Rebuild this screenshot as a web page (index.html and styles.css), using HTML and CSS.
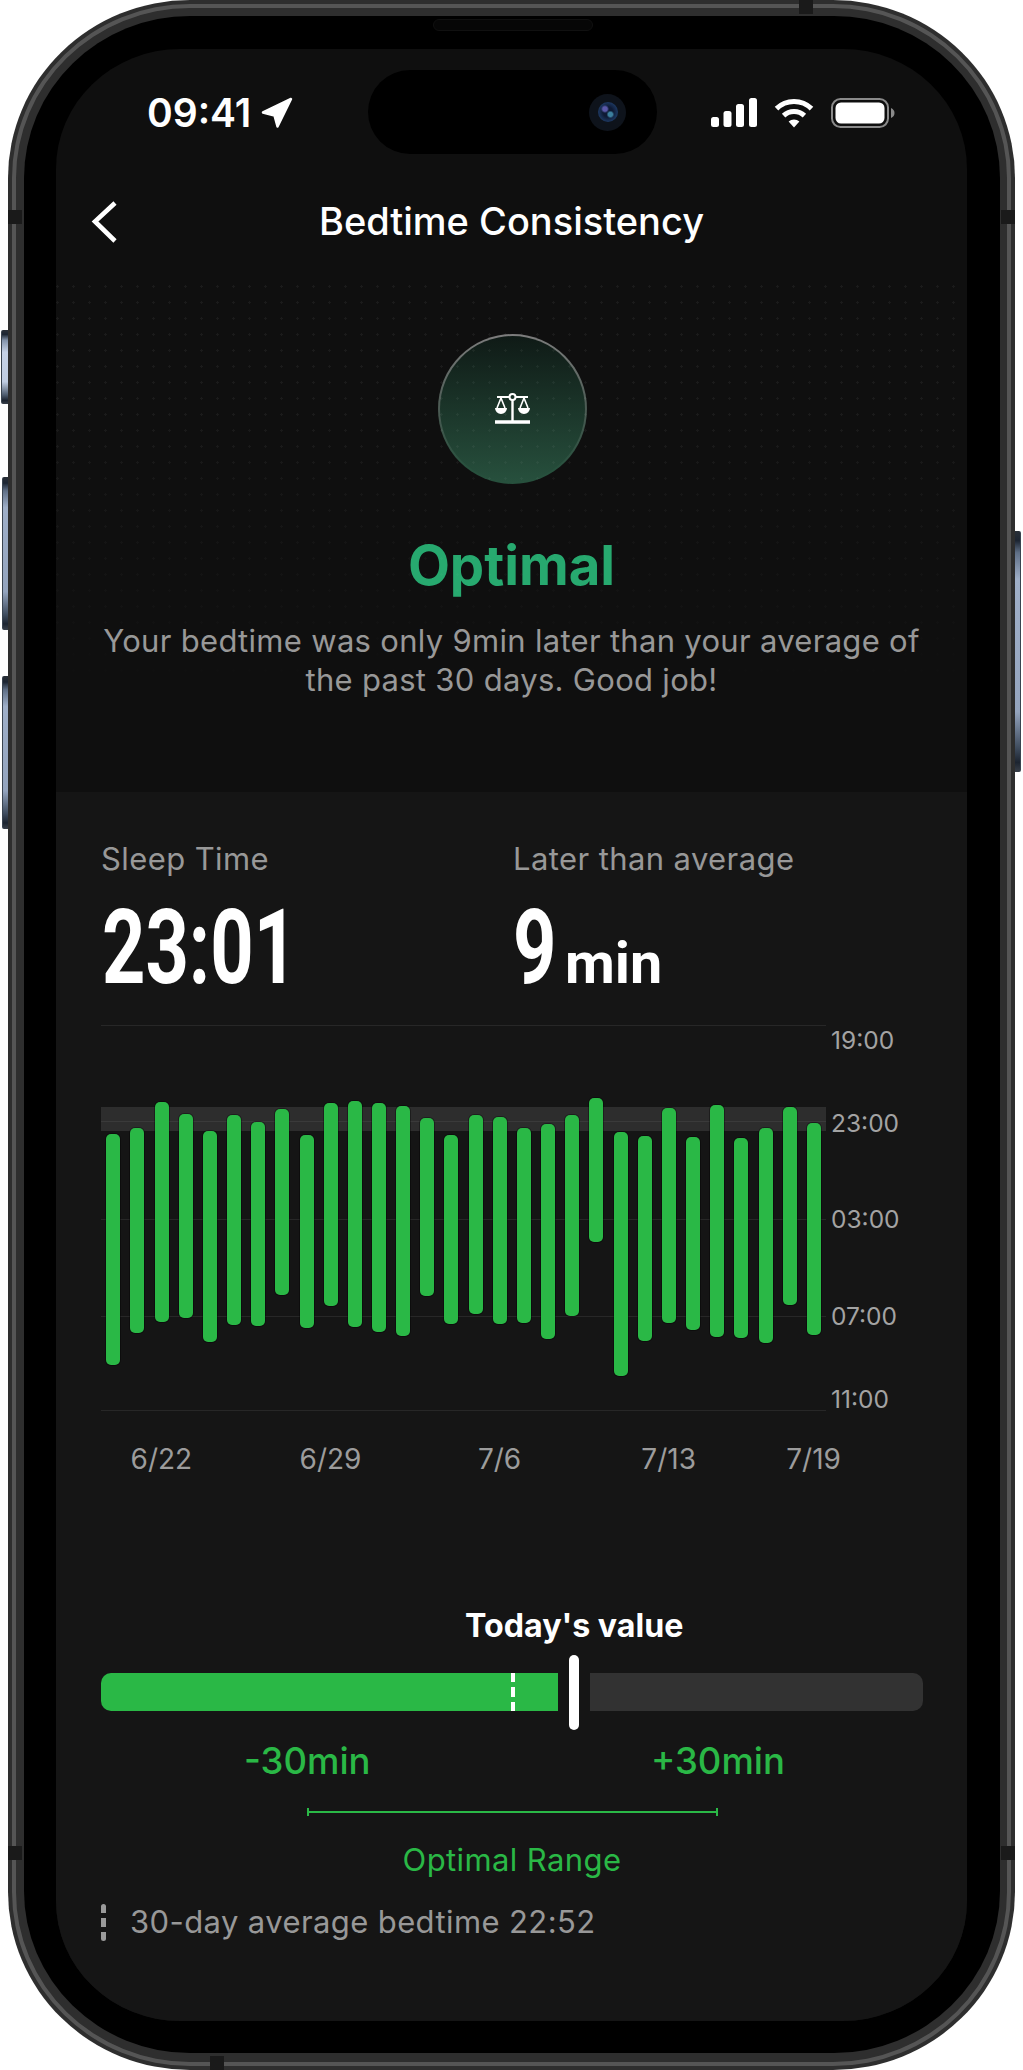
FILE: index.html
```html
<!DOCTYPE html>
<html lang="en">
<head>
<meta charset="utf-8">
<title>Bedtime Consistency</title>
<link rel="stylesheet" href="styles.css">
</head>
<body>
<div class="phone">
  <i class="btn btn-mute"></i><i class="btn btn-up"></i><i class="btn btn-down"></i><i class="btn btn-power"></i>
  <i class="band band-l1"></i><i class="band band-r1"></i><i class="band band-l2"></i><i class="band band-r2"></i><i class="band band-t"></i><i class="band band-b"></i>
  <div class="bezel">
    <div class="speaker"></div>
    <div class="screen">
      <div class="island"><div class="camera"><div class="lens"></div></div></div>
      <div class="status">
        <div class="status-left">
          <span class="clock">09:41</span>
          <svg class="arrow" viewBox="0 0 32 32"><path d="M30 2 L2 15.5 L13.5 18.5 L16.5 29.5 Z" fill="#fff" stroke="#fff" stroke-width="2.5" stroke-linejoin="round"/></svg>
        </div>
        <div class="status-right">
          <svg class="signal" viewBox="0 0 46 29"><rect x="0" y="19" width="8" height="10" rx="2.5"/><rect x="12.5" y="13" width="8" height="16" rx="2.5"/><rect x="25" y="6" width="8" height="23" rx="2.5"/><rect x="38" y="0" width="8" height="29" rx="2.5"/></svg>
          <svg class="wifi" viewBox="0 0 40 30"><path d="M2.5 10.6 A25 25 0 0 1 37.5 10.6" fill="none" stroke="#fff" stroke-width="5"/><path d="M9.6 17.6 A15 15 0 0 1 30.4 17.6" fill="none" stroke="#fff" stroke-width="5"/><path d="M14.6 23.5 A8 8 0 0 1 25.4 23.5 L20 29.5 Z" fill="#fff"/></svg>
          <svg class="battery" viewBox="0 0 64 30"><rect x="1" y="1" width="56" height="28" rx="8.5" fill="none" stroke="#8a8a8a" stroke-width="2"/><rect x="4.5" y="4.5" width="49" height="21" rx="5.5" fill="#fff"/><path d="M60 10 C62.5 11 63.5 13 63.5 15 C63.5 17 62.5 19 60 20 Z" fill="#8a8a8a"/></svg>
        </div>
      </div>
      <header class="nav">
        <svg class="back" viewBox="0 0 28 44"><path d="M25 3 L5 21.5 L25 41" fill="none" stroke="#fff" stroke-width="4.6"/></svg>
        <h1 class="title">Bedtime Consistency</h1>
      </header>
      <section class="hero">
        <div class="badge">
          <svg class="scale" viewBox="0 0 35 31">
            <circle cx="17.5" cy="4" r="3" fill="none" stroke="#fff" stroke-width="2"/>
            <path d="M2 4 H14 M21 4 H33" stroke="#fff" stroke-width="2.2"/>
            <path d="M17.5 7 V28" stroke="#fff" stroke-width="2.4"/>
            <path d="M0 29 H35" stroke="#fff" stroke-width="3.4"/>
            <path d="M6 5 L2 15 M6 5 L10 15 M29 5 L25 15 M29 5 L33 15" stroke="#fff" stroke-width="1.6" fill="none"/>
            <path d="M0 15 H12 A6 6 0 0 1 0 15 Z M23 15 H35 A6 6 0 0 1 23 15 Z" fill="#fff"/>
          </svg>
        </div>
        <h2 class="state">Optimal</h2>
        <p class="lead">Your bedtime was only 9min later than your average of<br>the past 30 days. Good job!</p>
      </section>
      <section class="panel">
        <div class="stats">
          <div class="stat">
            <div class="label">Sleep Time</div>
            <div class="value"><span class="num num-time">23:01</span></div>
          </div>
          <div class="stat">
            <div class="label">Later than average</div>
            <div class="value"><span class="num num-nine">9</span><span class="unit">min</span></div>
          </div>
        </div>
        <div class="plot">
          <div class="rule" style="top:0"></div>
          <div class="norm"></div>
          <div class="rule" style="top:194px"></div>
          <div class="rule" style="top:291px"></div>
          <div class="rule" style="top:385px"></div>
          <div class="bars">
            <span style="margin-top:108.7px;height:231px"></span>
            <span style="margin-top:102.7px;height:205px"></span>
            <span style="margin-top:77.3px;height:219.4px"></span>
            <span style="margin-top:89px;height:203.7px"></span>
            <span style="margin-top:106.3px;height:210.4px"></span>
            <span style="margin-top:90px;height:209.7px"></span>
            <span style="margin-top:97.3px;height:203.4px"></span>
            <span style="margin-top:84.3px;height:185.4px"></span>
            <span style="margin-top:110px;height:193px"></span>
            <span style="margin-top:78.3px;height:203px"></span>
            <span style="margin-top:76px;height:226px"></span>
            <span style="margin-top:78px;height:228.7px"></span>
            <span style="margin-top:81px;height:229.7px"></span>
            <span style="margin-top:93px;height:178.3px"></span>
            <span style="margin-top:110px;height:189px"></span>
            <span style="margin-top:90px;height:198.7px"></span>
            <span style="margin-top:92.3px;height:206.4px"></span>
            <span style="margin-top:103px;height:195.3px"></span>
            <span style="margin-top:98.7px;height:215px"></span>
            <span style="margin-top:90px;height:201px"></span>
            <span style="margin-top:73.3px;height:143.4px"></span>
            <span style="margin-top:107.3px;height:243.7px"></span>
            <span style="margin-top:110.7px;height:205.3px"></span>
            <span style="margin-top:82.7px;height:215.3px"></span>
            <span style="margin-top:112.3px;height:192.7px"></span>
            <span style="margin-top:80.3px;height:232px"></span>
            <span style="margin-top:113.3px;height:200px"></span>
            <span style="margin-top:103.3px;height:215px"></span>
            <span style="margin-top:82.3px;height:197.4px"></span>
            <span style="margin-top:97.7px;height:212px"></span>
          </div>
          <span class="ytick" style="top:15px">19:00</span>
          <span class="ytick" style="top:98px">23:00</span>
          <span class="ytick" style="top:194px">03:00</span>
          <span class="ytick" style="top:291px">07:00</span>
          <span class="ytick" style="top:374px">11:00</span>
        </div>
        <div class="xticks">
          <span>6/22</span><span>6/29</span><span>7/6</span><span>7/13</span><span>7/19</span>
        </div>
        <div class="today">Today's value</div>
        <div class="track">
          <div class="track-in"></div>
          <div class="track-gap"></div>
          <div class="track-out"></div>
          <i class="avg"></i>
          <i class="handle"></i>
        </div>
        <div class="ends"><span>-30min</span><span>+30min</span></div>
        <div class="range"></div>
        <div class="range-label">Optimal Range</div>
        <div class="note"><i class="note-mark"></i><span>30-day average bedtime 22:52</span></div>
      </section>
    </div>
  </div>
</div>
</body>
</html>
```
FILE: styles.css
```css
* { box-sizing: border-box; }
html, body { margin: 0; padding: 0; background: #fff; }
body { font-family: Inter, "Liberation Sans", sans-serif; }

.phone {
  position: relative;
  width: 1007px;
  height: 2070px;
  margin: 0 8px;
  padding: 16px 15px 17px 16px;
  background: #2e2e2e;
  border-radius: 182px / 178px;
}
.phone::before {
  content: "";
  position: absolute;
  inset: 4px;
  border: 4px solid #555;
  border-radius: 178px / 174px;
}
.btn {
  position: absolute;
  width: 7px;
  border-left: 1px solid #39434f;
  background: linear-gradient(#2a3038 0, #1c2532 4%, #5f6f86 9%, #9fafc8 20%, #94a4be 75%, #3f4c5e 90%, #1c2430 96%, #39404a 100%);
  border-radius: 2px 0 0 2px;
}
.btn-mute { left: -7px; top: 330px; height: 74px; background: linear-gradient(#2a3038 0, #1c2532 6%, #8393aa 14%, #c6d2e6 30%, #c0cde2 70%, #4c5a6c 88%, #1c2430 95%, #39404a 100%); }
.btn-up { left: -6px; width: 6px; top: 477px; height: 153px; }
.btn-down { left: -6px; width: 6px; top: 676px; height: 153px; }
.btn-power { right: -6px; width: 6px; top: 531px; height: 241px; border-left: 0; border-right: 1px solid #39434f; border-radius: 0 2px 2px 0; }
.band { position: absolute; background: #1a1a1a; }
.band-l1 { left: 0; top: 210px; width: 14px; height: 14px; }
.band-r1 { right: 0; top: 210px; width: 14px; height: 14px; }
.band-l2 { left: 0; top: 1846px; width: 14px; height: 14px; }
.band-r2 { right: 0; top: 1846px; width: 14px; height: 14px; }
.band-t { top: 0; left: 791px; width: 14px; height: 14px; }
.band-b { bottom: 0; left: 202px; width: 14px; height: 14px; }

.bezel {
  position: relative;
  height: 100%;
  padding: 33px 33px 32px 32px;
  background: #000;
  border-radius: 166px / 162px;
}
.speaker {
  position: absolute;
  top: 3px;
  left: 409px;
  width: 160px;
  height: 12px;
  background: #060606;
  border: 1px solid #101010;
  border-radius: 6px;
}
.screen {
  position: relative;
  display: flex;
  flex-direction: column;
  height: 100%;
  overflow: hidden;
  background: #0f0f0f;
  border-radius: 124px / 120px;
  color: #fff;
}
.island {
  position: absolute;
  top: 21px;
  left: 312px;
  width: 289px;
  height: 84px;
  display: flex;
  justify-content: flex-end;
  align-items: center;
  padding-right: 31px;
  background: #000;
  border-radius: 42px;
}
.camera {
  display: flex;
  align-items: center;
  justify-content: center;
  width: 37px;
  height: 37px;
  border-radius: 50%;
  background: #0e131b;
}
.lens {
  width: 20px;
  height: 20px;
  border-radius: 50%;
  background: radial-gradient(circle at 35% 35%, #5a58a8 0 12%, transparent 22%), radial-gradient(circle at 62% 62%, #3c7f9e 0 12%, transparent 22%), radial-gradient(circle, #0e1a34 0 35%, #2a5288 100%);
}

.status {
  display: flex;
  justify-content: space-between;
  align-items: flex-start;
  height: 128px;
  padding: 49px 72px 0 91px;
}
.status-left { display: flex; align-items: center; gap: 10px; height: 30px; }
.clock { font-size: 39px; font-weight: 600; line-height: 30px; }
.arrow { width: 32px; height: 32px; }
.status-right { display: flex; align-items: flex-start; }
.status-right svg { display: block; fill: #fff; }
.signal { width: 46px; height: 29px; margin-right: 17px; }
.wifi { width: 40px; height: 30px; margin-right: 17px; }
.battery { width: 64px; height: 30px; }

.nav {
  position: relative;
  display: flex;
  align-items: center;
  justify-content: center;
  height: 90px;
}
.back { position: absolute; left: 34px; top: 23px; width: 28px; height: 44px; }
.title { margin: 0 0 2px; font-size: 38px; font-weight: 500; line-height: 50px; }

.hero {
  position: relative;
  display: flex;
  flex-direction: column;
  align-items: center;
  height: 525px;
  padding-top: 67px;
}
.hero::after {
  content: "";
  position: absolute;
  inset: 18px 0 80px 0;
  background-image: radial-gradient(circle at 1.5px 1.5px, rgba(255,255,255,.05) 1px, transparent 1.4px);
  background-size: 16px 16px;
  -webkit-mask-image: linear-gradient(#000 0, #000 30%, transparent 100%);
  mask-image: linear-gradient(#000 0, #000 30%, transparent 100%);
  pointer-events: none;
}
.badge {
  display: flex;
  align-items: center;
  justify-content: center;
  width: 149px;
  height: 150px;
  margin-left: 2px;
  border-radius: 50%;
  background:
    linear-gradient(#0f1a16, #27503d) padding-box,
    linear-gradient(#7d7d7d, #4b5a53 50%, #27503d 90%) border-box;
  border: 2px solid transparent;
}
.scale { width: 35px; height: 31px; margin: -1px 0 0 -1px; }
.state {
  margin: 50px 0 0;
  color: #27a96f;
  font-size: 54.5px;
  font-weight: 700;
  line-height: 62px;
}
.lead {
  margin: 25px 0 0;
  color: #989898;
  font-size: 31px;
  letter-spacing: .3px;
  font-weight: 400;
  line-height: 39px;
  text-align: center;
}

.panel {
  flex: 1;
  padding: 47px 44px 0 45px;
  background: #151515;
}
.stats { display: grid; grid-template-columns: 412px 1fr; }
.label { color: #989898; font-size: 31px; letter-spacing: .4px; line-height: 40px; }
.value { display: flex; align-items: baseline; height: 100px; margin-top: 19px; white-space: nowrap; }
.num {
  display: inline-block;
  font-family: Roboto, "Liberation Sans", sans-serif;
  font-size: 103px;
  font-weight: 700;
  line-height: 100px;
  transform-origin: left center;
  transform: scaleX(.735);
}
.num-time { width: 183px; margin-left: 1px; }
.num-nine { width: 52px; }
.unit {
  font-family: Roboto, "Liberation Sans", sans-serif;
  font-size: 57.5px;
  font-weight: 700;
  line-height: 100px;
}

.plot { position: relative; width: 725px; height: 386px; margin-top: 27px; }
.rule { position: absolute; left: 0; right: 0; height: 1px; background: #272727; }
.norm {
  position: absolute;
  left: 0; right: 0;
  top: 82px;
  height: 24px;
  background: linear-gradient(#2d2d2d 0 14px, #3a3a3a 14px 15px, #2d2d2d 15px);
}
.bars { position: relative; display: flex; align-items: flex-start; gap: 10.17px; padding-left: 5.3px; }
.bars span {
  flex: none;
  width: 14px;
  background: #2ab846;
  border-radius: 5px;
  box-shadow: 0 0 0 1px rgba(0,0,0,.35);
}
.ytick {
  position: absolute;
  left: 730px;
  color: #a3a3a3;
  font-size: 24.5px;
  line-height: 30px;
  transform: translateY(-15px);
  white-space: nowrap;
}
.xticks {
  display: grid;
  grid-template-columns: repeat(30, 24.17px);
  margin-top: 31px;
  color: #9c9c9c;
  font-size: 28px;
  line-height: 34px;
}
.xticks span { justify-self: center; white-space: nowrap; grid-row: 1; }
.xticks span:nth-child(1) { grid-column: 3; }
.xticks span:nth-child(2) { grid-column: 10; }
.xticks span:nth-child(3) { grid-column: 17; }
.xticks span:nth-child(4) { grid-column: 24; }
.xticks span:nth-child(5) { grid-column: 30; }

.today { margin: 130px 0 0 364px; font-size: 32.2px; font-weight: 700; line-height: 40px; white-space: nowrap; }
.track { position: relative; display: flex; height: 38px; margin-top: 27px; }
.track-in { width: 457px; background: #2ab846; border-radius: 10px 0 0 10px; }
.track-gap { width: 32px; }
.track-out { flex: 1; background: #323232; border-radius: 0 10px 10px 0; }
.avg {
  position: absolute;
  left: 410px;
  top: 0;
  width: 4px;
  height: 38px;
  background: repeating-linear-gradient(#fff 0 9.5px, transparent 9.5px 14.5px);
}
.handle {
  position: absolute;
  left: 468px;
  top: -18px;
  width: 10px;
  height: 75px;
  background: #fff;
  border-radius: 5px;
}
.ends {
  display: flex;
  justify-content: space-between;
  margin-top: 28px;
  padding: 0 138px 0 143px;
  color: #2ab846;
  font-size: 36.5px;
  font-weight: 500;
  line-height: 44px;
}
.range {
  height: 2px;
  margin: 28px 205px 0 206px;
  background: #2ab846;
  position: relative;
}
.range::before, .range::after {
  content: "";
  position: absolute;
  top: -3px;
  width: 2px;
  height: 8px;
  background: #2ab846;
}
.range::before { left: 0; }
.range::after { right: 0; }
.range-label { margin-top: 27px; color: #2ab846; font-size: 31px; letter-spacing: .4px; line-height: 40px; text-align: center; }
.note { display: flex; align-items: center; gap: 24px; margin-top: 22px; color: #989898; font-size: 31px; letter-spacing: .4px; line-height: 40px; }
.note-mark {
  flex: none;
  width: 5px;
  height: 37px;
  border-radius: 2.5px;
  background: repeating-linear-gradient(#9a9a9a 0 9px, transparent 9px 14px);
}
```
